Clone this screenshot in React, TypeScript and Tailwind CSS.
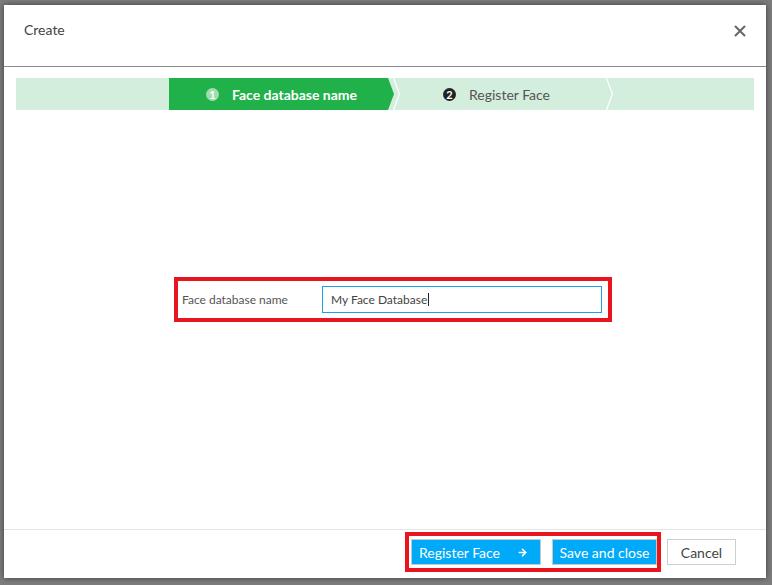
import { ArrowRight } from "lucide-react";

export default function App() {
  return (
    <div
      className="h-[585px] w-[772px] bg-[#7d7d7d] pt-[5px] pl-[4px]"
      style={{ fontFamily: "Lato, 'Noto Sans', sans-serif" }}
    >
      <div className="flex h-[573px] w-[762px] flex-col bg-white shadow-[0_0_6px_rgba(0,0,0,0.5)]">
        {/* header */}
        <header className="flex h-[62px] items-start justify-between border-b border-[#8c8c8c] pl-[20px] pr-[20px] pt-[16px]">
          <h1 className="text-[14px] leading-[18px] text-[#444]">Create</h1>
          <button className="mt-[4px] text-[#666]">
            <svg width="12" height="12" viewBox="0 0 12 12">
              <path d="M1.5 1.5 L10.5 10.5 M10.5 1.5 L1.5 10.5" stroke="currentColor" strokeWidth="2" strokeLinecap="round" />
            </svg>
          </button>
        </header>

        {/* body */}
        <div className="flex flex-1 flex-col px-[12px] pt-[11px]">
          <div className="flex h-[32px] bg-[#d3eedd]">
            <div className="w-[153px]" />
            <div className="relative flex w-[225px] items-center justify-center">
              <div
                className="absolute inset-0 bg-[#21b14b]"
                style={{ clipPath: "polygon(0 0, calc(100% - 6px) 0, 100% 50%, calc(100% - 6px) 100%, 0 100%)" }}
              />
              <span className="relative mr-[13px] flex h-[13px] w-[13px] items-center justify-center rounded-full bg-[#9fdcb0] text-[11px] font-bold leading-none text-white">
                1
              </span>
              <span className="relative text-[14px] font-bold text-white">Face database name</span>
            </div>
            <div className="relative flex w-[214px] items-center pl-[49px]">
              <svg className="absolute left-[-1px] top-0" width="8" height="32" viewBox="0 0 8 32">
                <path d="M0.5 0 L6.5 16 L0.5 32" fill="none" stroke="white" strokeWidth="1.2" />
              </svg>
              <svg className="absolute right-[-6px] top-0" width="8" height="32" viewBox="0 0 8 32">
                <path d="M0.5 0 L6.5 16 L0.5 32" fill="none" stroke="white" strokeWidth="1.2" />
              </svg>
              <span className="mr-[13px] flex h-[13px] w-[13px] items-center justify-center rounded-full bg-[#222] text-[11px] font-bold leading-none text-white">
                2
              </span>
              <span className="text-[14px] text-[#555]">Register Face</span>
            </div>
          </div>

          <div className="ml-[158px] mt-[167px] flex h-[45px] w-[438px] items-center border-[4px] border-[#e8151f] pl-[4px] pr-[6px]">
            <label className="w-[140px] text-[12px] text-[#555]">Face database name</label>
            <div className="flex h-[27px] flex-1 items-center border border-[#1ba1e6] pl-[8px] text-[12px] text-[#444]">
              My Face Database
              <span className="ml-[1px] h-[13px] w-px bg-[#222]" />
            </div>
          </div>
        </div>

        {/* footer */}
        <footer className="flex h-[49px] items-center justify-end gap-[6px] border-t border-[#e3e3e3] pr-[30px] pb-[4px]">
          <div className="flex h-[40px] items-center gap-[11px] border-[4px] border-[#e8151f] pl-[2px]">
            <button className="flex h-[26px] w-[130px] items-center border border-[#c8c8c8] bg-[#00aaf8] pl-[7px] text-[14px] text-white">
              Register Face
              <ArrowRight size={11} strokeWidth={3.5} className="ml-[17px]" />
            </button>
            <button className="h-[26px] w-[105px] border border-[#c8c8c8] bg-[#00aaf8] text-[14px] text-white">
              Save and close
            </button>
          </div>
          <button className="h-[26px] w-[69px] border border-[#cfcfcf] bg-white text-[14px] text-[#444]">
            Cancel
          </button>
        </footer>
      </div>
    </div>
  );
}
